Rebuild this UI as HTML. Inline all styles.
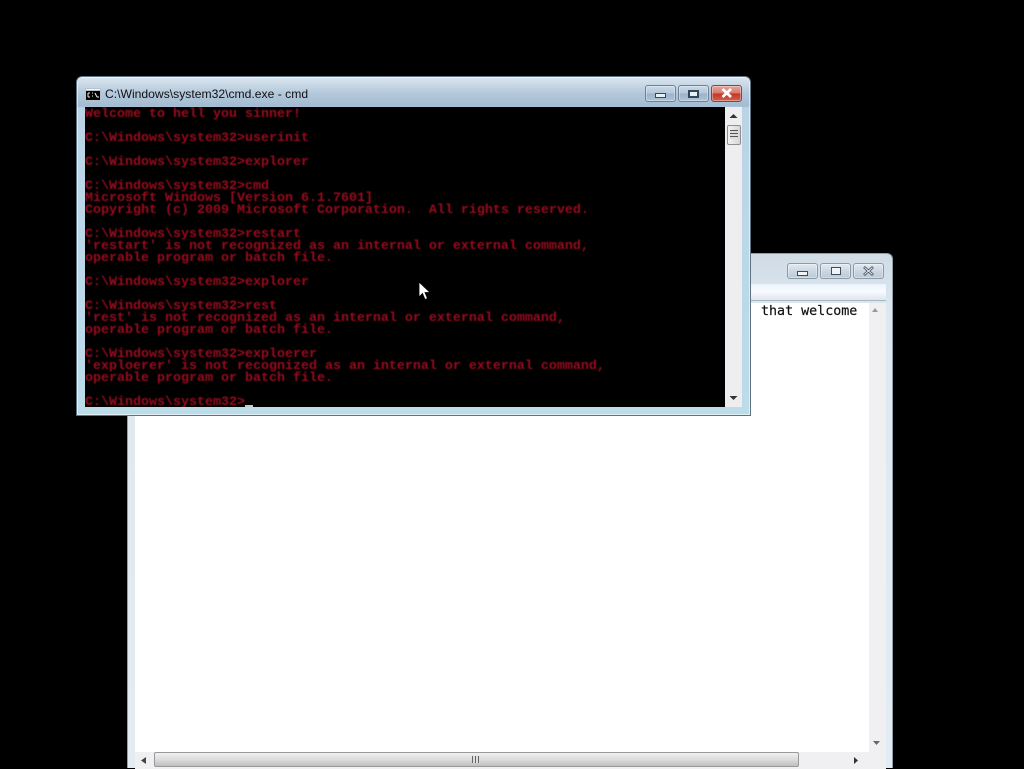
<!DOCTYPE html>
<html><head><meta charset="utf-8">
<style>
html,body{margin:0;padding:0;background:#000;width:1024px;height:768px;overflow:hidden}
.abs,.abs *{box-sizing:border-box}
.abs{position:absolute}
.btn{position:absolute;box-sizing:border-box;border:1px solid #6f8295;border-radius:3px;background:linear-gradient(#c9d9e8 0,#b4c8da 48%,#9cb2c8 52%,#afc4d8 100%);box-shadow:inset 0 0 0 1px rgba(255,255,255,.35)}
.close{border-color:#7a4a48;background:linear-gradient(#e8a49a 0,#d9776a 48%,#c0352a 52%,#d2614f 100%)}
#wrap{position:absolute;left:85px;top:107px;width:640px;height:300px;background:#000;overflow:hidden}
#con{position:absolute;left:0;top:1.5px;width:640px;font:bold 13.33px/12px "Liberation Mono",monospace;color:#9a0c1e;white-space:pre;filter:blur(.45px)}
.sbtrack{position:absolute;background:#eeeef0}
</style></head>
<body>
<!-- back window -->
<div class="abs" style="left:127px;top:253px;width:766px;height:515px;border-radius:6px 6px 0 0;background:linear-gradient(#cfdbe6,#dfe8ef 60px,#e4ecf3);border:1px solid #8ea0ad;border-bottom:0">
  <div class="abs" style="left:7px;top:30px;width:751px;height:16px;background:linear-gradient(#eaf3fc,#f8fbfe 45%,#dde6ee)"></div>
  <div class="abs" style="left:7px;top:46px;width:751px;height:1px;background:#a9b5c0"></div>
  <div class="abs" style="left:7px;top:49px;width:751px;height:466px;background:#fff"></div>
  <div class="abs" style="left:741px;top:49px;width:17px;height:450px;background:#f0f0f2"></div>
  <div class="abs" style="left:7px;top:498px;width:751px;height:17px;background:#f0f0f2"></div>
  <div class="abs" style="left:26px;top:498px;width:645px;height:15px;border:1px solid #999;border-radius:2px;background:linear-gradient(#f0f0f0,#dcdcdc 50%,#bfbfbf)"></div>
  <div class="abs" style="left:344px;top:502px;width:8px;height:7px;background:repeating-linear-gradient(90deg,#666 0 1px,#ddd 1px 3px)"></div>
  <svg class="abs" style="left:0;top:0" width="766" height="515">
    <path d="M744 58l3-4 3 4z" fill="#999"/>
    <path d="M745 487h7l-3.500 4z" fill="#666"/>
    <path d="M18 503v7l-5-3.500z" fill="#444"/>
    <path d="M726 503v7l4-3.500z" fill="#333"/>
  </svg>
</div>
<div class="btn" style="left:787px;top:263px;width:31px;height:16px;background:linear-gradient(#e2e9f0,#ccd7e2 50%,#bcc9d6);border-color:#8b9aa8"></div>
<div class="abs" style="left:797px;top:271px;width:11px;height:5px;border:1px solid #3d4c5c;background:#f0f4f8"></div>
<div class="btn" style="left:820px;top:263px;width:31px;height:16px;background:linear-gradient(#e2e9f0,#ccd7e2 50%,#bcc9d6);border-color:#8b9aa8"></div>
<div class="abs" style="left:831px;top:267px;width:10px;height:8px;border:1.500px solid #3d4c5c;background:#f0f4f8"></div>
<div class="btn" style="left:853px;top:263px;width:31px;height:16px;background:linear-gradient(#e2e9f0,#ccd7e2 50%,#bcc9d6);border-color:#8b9aa8"></div>
<svg class="abs" style="left:862px;top:265px" width="14" height="12"><path d="M2 2l9 8M11 2l-9 8" stroke="#44525f" stroke-width="2.600"/><path d="M2.500 2.500l8 7M10.500 2.500l-8 7" stroke="#eef2f5" stroke-width=".9"/></svg>
<div class="abs" style="left:761px;top:304px;font:13.33px/16px 'DejaVu Sans Mono',monospace;color:#111;white-space:pre;-webkit-text-stroke:.2px #111">that welcome</div>

<!-- cmd window -->
<div class="abs" style="left:76px;top:76px;width:675px;height:340px;border-radius:6px 6px 0 0;border:1px solid #5d7180;background:linear-gradient(#dbe6ef 0,#b4c9dc 16px,#a3bbd2 29px,#bad4e6 31px,#bcdcea 100%);box-shadow:inset 0 0 0 1px rgba(255,255,255,.55)"></div>
<svg class="abs" style="left:85px;top:88px" width="16" height="13"><rect width="16" height="13" fill="#b8c2cc"/><rect x="1" y="3" width="14" height="9" fill="#000"/><rect x="1" y="1" width="14" height="1" fill="#f0f4f8"/><path d="M3 5h2M3 5v4M3 9h2M7 5h1M7 8h1M10 5l2 4M12 9h2" stroke="#eee" fill="none"/></svg>
<div class="abs" style="left:105px;top:86px;font:12.15px/16px 'Liberation Sans',sans-serif;color:#111;white-space:pre">C:\Windows\system32\cmd.exe - cmd</div>
<div class="btn" style="left:645px;top:85px;width:31px;height:17px"></div>
<div class="abs" style="left:655px;top:93px;width:11px;height:5px;border:1px solid #33475c;background:#e8f0f6"></div>
<div class="btn" style="left:678px;top:85px;width:31px;height:17px"></div>
<div class="abs" style="left:688px;top:90px;width:11px;height:8px;border:2px solid #33475c;background:#e8f0f6"></div>
<div class="btn close" style="left:711px;top:85px;width:31px;height:17px"></div>
<svg class="abs" style="left:720px;top:87px" width="14" height="12"><path d="M2.500 2l8.500 8M11 2l-8.500 8" stroke="#fff" stroke-width="2.800"/></svg>

<div id="wrap"><div id="con">Welcome to hell you sinner!

C:\Windows\system32>userinit

C:\Windows\system32>explorer

C:\Windows\system32>cmd
Microsoft Windows [Version 6.1.7601]
Copyright (c) 2009 Microsoft Corporation.  All rights reserved.

C:\Windows\system32>restart
'restart' is not recognized as an internal or external command,
operable program or batch file.

C:\Windows\system32>explorer

C:\Windows\system32>rest
'rest' is not recognized as an internal or external command,
operable program or batch file.

C:\Windows\system32>exploerer
'exploerer' is not recognized as an internal or external command,
operable program or batch file.

C:\Windows\system32></div></div>
<div class="abs" style="left:245px;top:405px;width:8px;height:2px;background:#c8c8c8"></div>

<div class="sbtrack" style="left:725px;top:107px;width:17px;height:300px"></div>
<div class="abs" style="left:727px;top:125px;width:14px;height:20px;border:1px solid #8f8f8f;border-radius:2px;background:linear-gradient(90deg,#f2f2f2,#d6d6d6)"></div>
<div class="abs" style="left:730px;top:130px;width:8px;height:9px;background:repeating-linear-gradient(#555 0 1px,#ddd 1px 3px)"></div>
<svg class="abs" style="left:725px;top:107px" width="17" height="300">
  <path d="M4.500 11l4-4 4 4z" fill="#333"/>
  <path d="M4.500 289h8l-4 4z" fill="#333"/>
</svg>

<!-- mouse cursor -->
<svg class="abs" style="left:418px;top:281px" width="14" height="20"><path d="M1 1v15l3.500-3.500 2.500 6 2.500-1-2.500-6h5z" fill="#fff" stroke="#000" stroke-width=".8"/></svg>
</body></html>
